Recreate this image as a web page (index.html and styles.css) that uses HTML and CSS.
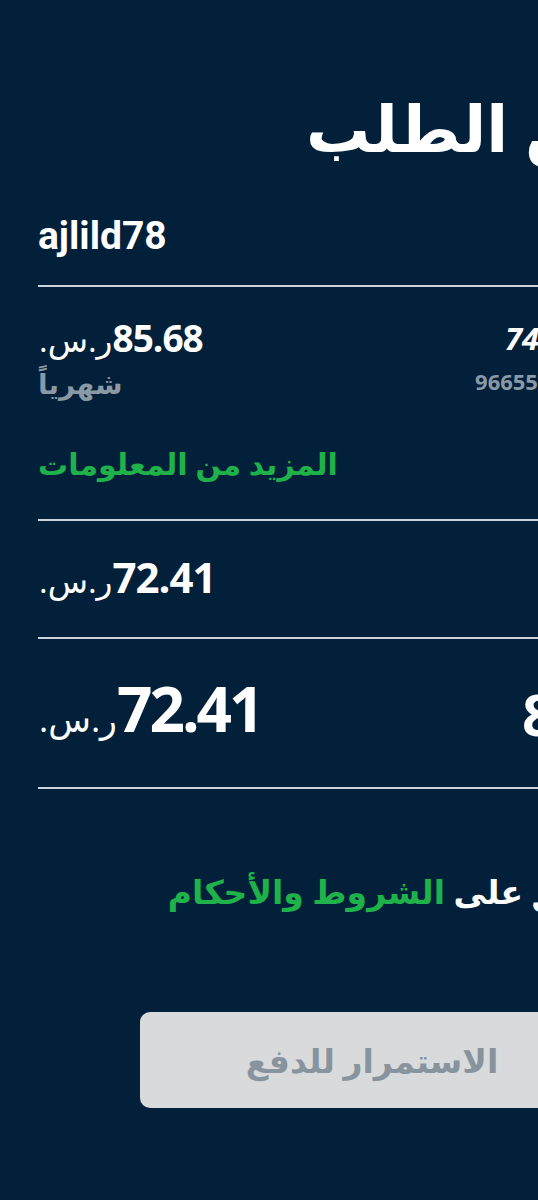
FILE: index.html
```html
<!DOCTYPE html>
<html lang="ar">
<head>
    <meta charset="UTF-8">
    <meta name="viewport" content="width=device-width, initial-scale=1.0">
    <title>ملخص الطلب</title>
    <link rel="stylesheet" href="styles.css">
</head>
<body>
    <main class="page" dir="rtl">
        <h1 class="title">ملخص الطلب</h1>

        <div class="row account-row">
            <span class="label">الحساب</span>
            <span class="username" dir="ltr">ajlild78</span>
        </div>

        <div class="plan">
            <div class="row plan-row">
                <div class="plan-info">
                    <div class="plan-name" dir="ltr">74 Mbps</div>
                    <div class="phone" dir="ltr">966551234567</div>
                </div>
                <div class="plan-price">
                    <div class="price"><span class="amount">85.68</span><span class="cur">ر.س.</span></div>
                    <div class="muted">شهرياً</div>
                </div>
            </div>
            <a href="#" class="more-link">المزيد من المعلومات</a>
        </div>

        <div class="row subtotal-row">
            <span class="label">المبلغ</span>
            <span class="price"><span class="amount">72.41</span><span class="cur">ر.س.</span></span>
        </div>

        <div class="row total-row">
            <span class="total-label">8.68</span>
            <span class="price big"><span class="amount">72.41</span><span class="cur">ر.س.</span></span>
        </div>

        <p class="terms">أوافق على <a href="#">الشروط والأحكام</a></p>

        <div class="actions">
            <button class="pay-btn" disabled>الاستمرار للدفع</button>
        </div>
    </main>
</body>
</html>
```

FILE: styles.css
```css
html, body {
    overflow-x: hidden;
}
body {
    margin: 0;
    background-color: #02203a;
    color: #ffffff;
    font-family: "Open Sans", "DejaVu Sans", sans-serif;
}
.page {
    width: 588px;
    padding: 90px 38px 60px;
}
.title {
    margin: 0 -98px 0 0;
    font-size: 64px;
    line-height: 76px;
    font-weight: bold;
    white-space: nowrap;
}
.row {
    display: flex;
    justify-content: space-between;
    align-items: center;
}
.account-row {
    height: 121px;
    padding-top: 20px;
    border-bottom: 2px solid #c9d4de;
    box-sizing: border-box;
}
.label {
    font-size: 22px;
}
.username {
    font-family: Roboto, sans-serif;
    font-size: 39px;
    font-weight: bold;
}
.plan {
    display: flex;
    flex-direction: column;
    padding: 28px 0 35px;
    border-bottom: 2px solid #c9d4de;
}
.plan-row {
    align-items: flex-start;
}
.plan-name {
    font-size: 31px;
    font-weight: bold;
    font-style: italic;
    line-height: 46px;
    text-align: right;
}
.phone {
    color: #8a99a6;
    font-size: 22px;
    font-weight: bold;
    line-height: 40px;
    text-align: right;
}
.plan-price {
    display: flex;
    flex-direction: column;
    align-items: flex-end;
}
.muted {
    color: #8a99a6;
    font-size: 28px;
    font-weight: bold;
    line-height: 40px;
}
.price {
    display: flex;
    align-items: baseline;
    line-height: 46px;
}
.amount {
    font-size: 37px;
    font-weight: bold;
    letter-spacing: -1px;
}
.cur {
    font-size: 33px;
    margin-left: 1px;
}
.more-link {
    align-self: flex-end;
    margin-top: 40px;
    color: #1fb24a;
    font-size: 30px;
    font-weight: bold;
    text-decoration: none;
}
.subtotal-row {
    height: 116px;
    border-bottom: 2px solid #c9d4de;
}
.subtotal-row .amount {
    font-size: 42px;
}
.subtotal-row .cur {
    font-size: 33px;
}
.big .cur {
    font-size: 35px;
}
.total-row {
    height: 148px;
    border-bottom: 2px solid #c9d4de;
}
.big .amount,
.total-label {
    font-size: 62px;
    font-weight: bold;
    letter-spacing: -3px;
}
.total-label {
    font-size: 58px;
}
.terms {
    margin: 80px 0 0;
    font-size: 33px;
    font-weight: bold;
}
.terms a {
    color: #1fb24a;
    text-decoration: none;
}
.actions {
    display: flex;
    margin-top: 98px;
    padding-left: 102px;
}
.pay-btn {
    flex: 1;
    height: 96px;
    padding: 0 22px 0 0;
    border: none;
    border-radius: 10px;
    background-color: #d9dadb;
    color: #87939d;
    font-family: inherit;
    font-size: 33px;
    font-weight: bold;
}
```
